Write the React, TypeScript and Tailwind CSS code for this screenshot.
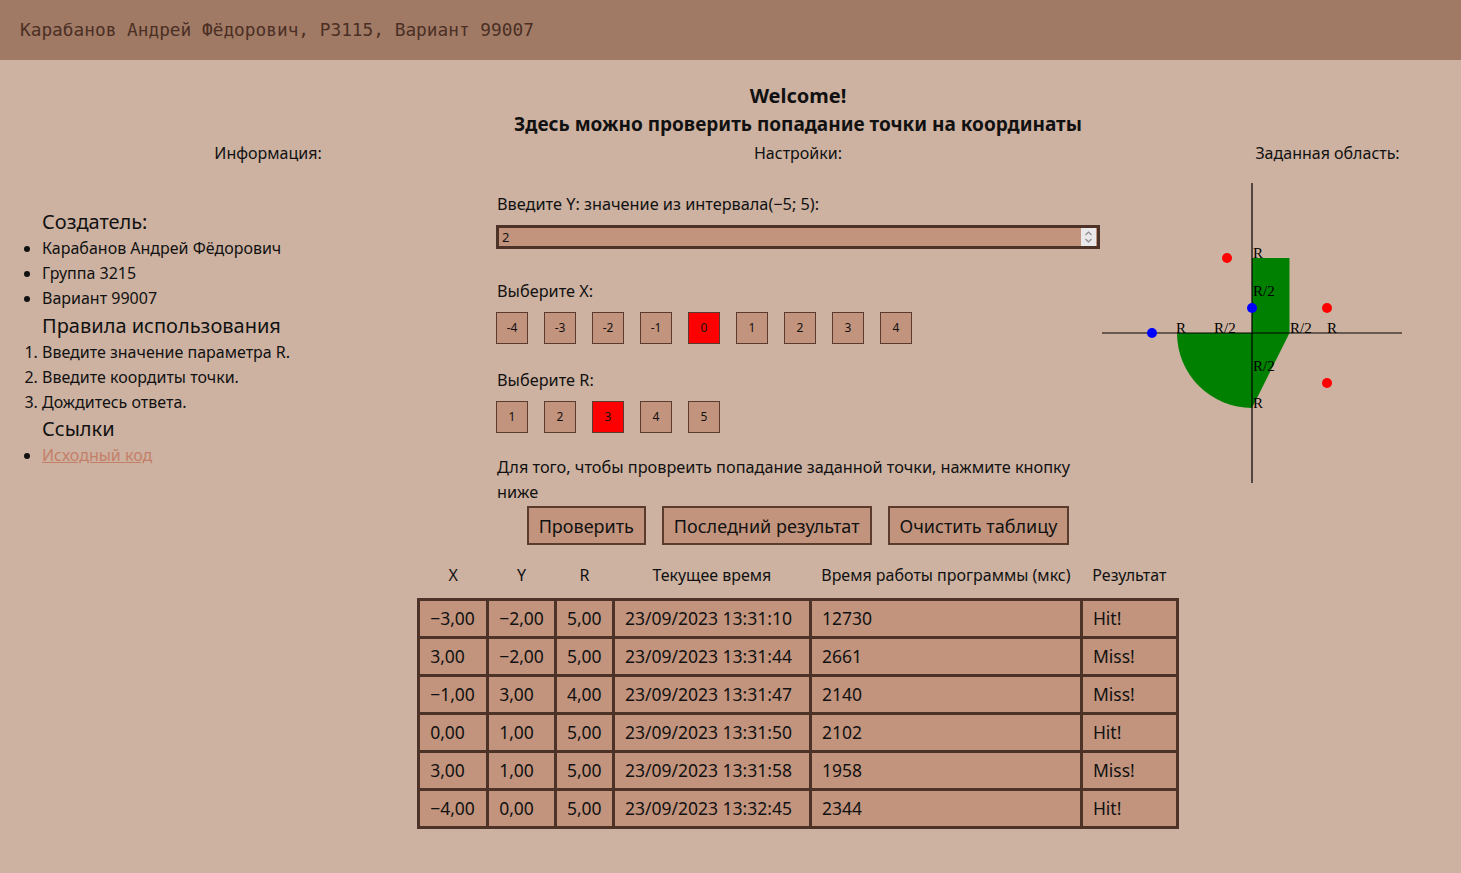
import { useState } from "react";

const xValues = [-4, -3, -2, -1, 0, 1, 2, 3, 4];
const rValues = [1, 2, 3, 4, 5];

const rows = [
  { x: "−3,00", y: "−2,00", r: "5,00", time: "23/09/2023 13:31:10", work: "12730", res: "Hit!" },
  { x: "3,00", y: "−2,00", r: "5,00", time: "23/09/2023 13:31:44", work: "2661", res: "Miss!" },
  { x: "−1,00", y: "3,00", r: "4,00", time: "23/09/2023 13:31:47", work: "2140", res: "Miss!" },
  { x: "0,00", y: "1,00", r: "5,00", time: "23/09/2023 13:31:50", work: "2102", res: "Hit!" },
  { x: "3,00", y: "1,00", r: "5,00", time: "23/09/2023 13:31:58", work: "1958", res: "Miss!" },
  { x: "−4,00", y: "0,00", r: "5,00", time: "23/09/2023 13:32:45", work: "2344", res: "Hit!" },
];

function Graph() {
  return (
    <svg width="300" height="300" viewBox="0 0 300 300" className="block">
      <rect x="150" y="75" width="37.5" height="75" fill="#008000" />
      <polygon points="150,150 187.5,150 150,225" fill="#008000" />
      <path d="M150 150 L75 150 A75 75 0 0 0 150 225 Z" fill="#008000" />
      <line x1="0" y1="150" x2="300" y2="150" stroke="black" strokeWidth="1.2" />
      <line x1="150" y1="0" x2="150" y2="300" stroke="black" strokeWidth="1.2" />
      <g fontFamily="'Liberation Serif', serif" fontSize="15" fill="black">
        <text x="74" y="150">R</text>
        <text x="112" y="150">R/2</text>
        <text x="188" y="150">R/2</text>
        <text x="225" y="150">R</text>
        <text x="151" y="75">R</text>
        <text x="151" y="113">R/2</text>
        <text x="151" y="188">R/2</text>
        <text x="151" y="225">R</text>
      </g>
      <circle cx="125" cy="75" r="5" fill="red" />
      <circle cx="225" cy="125" r="5" fill="red" />
      <circle cx="225" cy="200" r="5" fill="red" />
      <circle cx="150" cy="125" r="5" fill="blue" />
      <circle cx="50" cy="150" r="5" fill="blue" />
    </svg>
  );
}

export default function App() {
  const [x, setX] = useState(0);
  const [r, setR] = useState(3);
  const [y, setY] = useState("2");

  return (
    <div className="min-h-screen bg-[#cdb2a1] font-['Noto_Sans',sans-serif] text-[#111]">
      <header className="flex h-[60px] items-center bg-[#a07a65] pl-5 font-['DejaVu_Sans_Mono',monospace] text-[17.8px] text-[#4b2f24]">
        Карабанов Андрей Фёдорович, P3115, Вариант 99007
      </header>

      <div className="ml-[496px] flex w-[604px] flex-col items-center pt-[21px] font-bold">
        <h1 className="whitespace-nowrap text-[20px] leading-[29px]">Welcome!</h1>
        <h2 className="whitespace-nowrap text-[19px] leading-[29px]">
          Здесь можно проверить попадание точки на координаты
        </h2>
      </div>

      <div className="mt-[2px] flex text-[16px] leading-[24px]">
        <div className="w-[536px] text-center">Информация:</div>
        <div className="w-[524px] text-center">Настройки:</div>
        <div className="flex-1 pl-[134px] text-center">Заданная область:</div>
      </div>

      <div className="flex">
        {/* left */}
        <div className="w-[496px] pt-[42px] text-[16px] leading-[25px]">
          <div className="pl-[42px] text-[20px] leading-[29px]">Создатель:</div>
          <ul className="list-disc pl-[42px]">
            <li>Карабанов Андрей Фёдорович</li>
            <li>Группа 3215</li>
            <li>Вариант 99007</li>
          </ul>
          <div className="pl-[42px] text-[20px] leading-[29px]">Правила использования</div>
          <ol className="list-decimal pl-[42px]">
            <li>Введите значение параметра R.</li>
            <li>Введите коордиты точки.</li>
            <li>Дождитесь ответа.</li>
          </ol>
          <div className="pl-[42px] text-[20px] leading-[28px]">Ссылки</div>
          <ul className="list-disc pl-[42px]">
            <li>
              <a href="#" className="text-[#c47f69] underline">
                Исходный код
              </a>
            </li>
          </ul>
        </div>

        {/* middle */}
        <div className="w-[604px] pt-[27px] text-[16.3px] leading-[24px]">
          <div className="pl-[1px]">Введите Y: значение из интервала(−5; 5):</div>
          <div className="mt-[9px] flex h-[24px] items-center border-[3px] border-[#4d3228] bg-[#c3947d]">
            <input
              value={y}
              onChange={(e) => setY(e.target.value)}
              className="h-full w-full bg-transparent pl-[3px] text-[13px] outline-none"
            />
            <div className="mr-[1px] flex h-[18px] w-[15px] flex-col items-center justify-center bg-[#ebe8ec]">
              <svg width="9" height="14" viewBox="0 0 9 14" fill="none" stroke="#8a8a8a" strokeWidth="1.2">
                <path d="M1.5 5 L4.5 2 L7.5 5" />
                <path d="M1.5 9 L4.5 12 L7.5 9" />
              </svg>
            </div>
          </div>

          <div className="mt-[30px] pl-[1px]">Выберите X:</div>
          <div className="mt-[9px] flex gap-4">
            {xValues.map((v) => (
              <button
                key={v}
                onClick={() => setX(v)}
                className={
                  "h-[32px] w-[32px] border border-[#5a3b2d] text-[12px] " +
                  (v === x ? "bg-[#ff0000]" : "bg-[#c3947d]")
                }
              >
                {v}
              </button>
            ))}
          </div>

          <div className="mt-[24px] pl-[1px]">Выберите R:</div>
          <div className="mt-[9px] flex gap-4">
            {rValues.map((v) => (
              <button
                key={v}
                onClick={() => setR(v)}
                className={
                  "h-[32px] w-[32px] border border-[#5a3b2d] text-[12px] " +
                  (v === r ? "bg-[#ff0000]" : "bg-[#c3947d]")
                }
              >
                {v}
              </button>
            ))}
          </div>

          <p className="mt-[22px] pl-[1px] leading-[25px]">
            Для того, чтобы провреить попадание заданной точки, нажмите кнопку ниже
          </p>

          <div className="mt-[1px] flex justify-center gap-4 text-[18px]">
            <button className="h-[39px] border-2 border-[#5a3b2d] bg-[#c3947d] px-[10px]">Проверить</button>
            <button className="h-[39px] border-2 border-[#5a3b2d] bg-[#c3947d] px-[10px]">Последний результат</button>
            <button className="h-[39px] border-2 border-[#5a3b2d] bg-[#c3947d] px-[10px]">Очистить таблицу</button>
          </div>

          <div className="mt-[10px] flex justify-center">
            <table className="shrink-0 border-collapse text-left">
              <thead>
                <tr className="h-[44px] text-[16px]">
                  <th className="w-[69px] pb-[2px] text-center font-normal">X</th>
                  <th className="w-[67px] pb-[2px] text-center font-normal">Y</th>
                  <th className="w-[58px] pb-[2px] text-center font-normal">R</th>
                  <th className="w-[197px] pb-[2px] text-center font-normal">Текущее время</th>
                  <th className="w-[271px] pb-[2px] text-center font-normal">Время работы программы (мкс)</th>
                  <th className="w-[96px] pb-[2px] text-center font-normal">Результат</th>
                </tr>
              </thead>
              <tbody className="text-[17.5px]">
                {rows.map((row, i) => (
                  <tr key={i} className="h-[38px] bg-[#c3947d]">
                    <td className="border-[3px] border-[#4d3228] px-[10px]">{row.x}</td>
                    <td className="border-[3px] border-[#4d3228] px-[10px]">{row.y}</td>
                    <td className="border-[3px] border-[#4d3228] px-[10px]">{row.r}</td>
                    <td className="border-[3px] border-[#4d3228] px-[10px]">{row.time}</td>
                    <td className="border-[3px] border-[#4d3228] px-[10px]">{row.work}</td>
                    <td className="border-[3px] border-[#4d3228] px-[10px]">{row.res}</td>
                  </tr>
                ))}
              </tbody>
            </table>
          </div>
        </div>

        {/* right */}
        <div className="flex-1 pl-[2px] pt-[18px]">
          <Graph />
        </div>
      </div>
    </div>
  );
}
